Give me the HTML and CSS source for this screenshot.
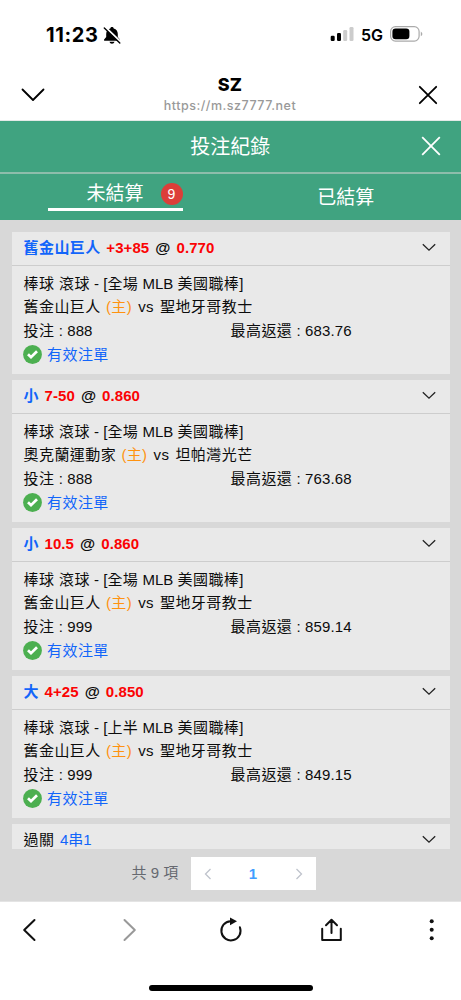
FILE: index.html
```html
<!DOCTYPE html>
<html lang="zh-Hant">
<head>
<meta charset="utf-8">
<meta name="viewport" content="width=device-width, initial-scale=1">
<title>投注紀錄</title>
<link rel="stylesheet" href="styles.css">
</head>
<body>
<header class="status">
  <div class="clock"><span class="time">11:23</span>
    <svg class="bell" width="18" height="19" viewBox="0 0 18 19"><path d="M9 1c-1 0-1.600.6-1.700 1.400C4.500 3.100 3.200 5.400 3.200 8v3L1.300 13.200c-.6.8-.3 1.600.6 1.600h14.200c.9 0 1.200-.8.6-1.600L14.800 11V8c0-2.600-1.300-4.900-4.100-5.600C10.600 1.600 10 1 9 1zM6.500 15.800h5c-.3 1.300-1.200 2-2.500 2s-2.200-.7-2.500-2z"/><path d="M2 1l15.500 15" stroke="#fff" stroke-width="2.400"/><path d="M1.300 1.900l15.500 15" stroke="#000" stroke-width="1.400" stroke-linecap="round"/></svg>
  </div>
  <div class="signals">
    <svg width="24" height="16" viewBox="0 0 24 16"><rect x=".7" y="9.800" width="4" height="5.200" rx="1.200"/><rect x="7" y="7" width="4" height="8" rx="1.200"/><g fill="#ccc"><rect x="13.200" y="4" width="4" height="11" rx="1.200"/><rect x="19.500" y="1" width="4" height="14" rx="1.200"/></g></svg>
    <span class="net">5G</span>
    <svg width="33" height="16" viewBox="0 0 33 16"><rect x=".6" y=".7" width="28.500" height="14.400" rx="4.800" fill="none" stroke="#aaa" stroke-width="1.200"/><rect x="2.400" y="2.500" width="17" height="10.800" rx="3.200"/><path d="M30.800 5.500q3.200 2.400 0 4.800z" fill="#aaa"/></svg>
  </div>
</header>
<div class="browser">
  <svg class="down" width="26" height="16" viewBox="0 0 26 16"><path d="M2.500 2.500L13 13 23.500 2.500"/></svg>
  <div class="site"><div class="name">SZ</div><div class="url">https://m.sz7777.net</div></div>
  <svg class="close" width="20" height="20" viewBox="0 0 20 20"><path d="M1.800 1.800l16.400 16.400M18.200 1.800L1.800 18.200"/></svg>
</div>
<div class="titlebar">
  <h1>投注紀錄</h1>
  <svg class="x" width="20" height="20" viewBox="0 0 20 20"><path d="M1.200 1.200l17.600 17.600M18.800 1.200L1.200 18.800"/></svg>
</div>
<nav class="tabs">
  <div class="tab active"><span>未結算</span><b class="badge">9</b></div>
  <div class="tab"><span>已結算</span></div>
</nav>
<main class="records">
  <div class="list" id="list"></div>
  <div class="pager"><span class="total">共 9 項</span>
    <div class="pages">
      <svg width="8" height="12" viewBox="0 0 8 12"><path d="M6.500 1L1.500 6l5 5"/></svg>
      <b>1</b>
      <svg width="8" height="12" viewBox="0 0 8 12"><path d="M1.500 1l5 5-5 5"/></svg>
    </div>
  </div>
</main>
<footer class="toolbar">
  <div class="tools">
    <svg width="26" height="26" viewBox="0 0 26 26"><path d="M17.500 3L7.200 13l10.300 10" /></svg>
    <svg class="muted" width="26" height="26" viewBox="0 0 26 26"><path d="M6.500 3l10.300 10L6.500 23"/></svg>
    <svg width="26" height="26" viewBox="0 0 26 26"><path d="M12.500 4.200A9.600 9.600 0 1 0 21.900 10.300"/><path d="M12 .4l7 3.900-7 3.900z" class="solid"/></svg>
    <svg width="26" height="26" viewBox="0 0 26 26"><path d="M3.200 11.800v11.200h18.600V11.800M12.500 16V3M7 8.300L12.500 2.800l5.500 5.500"/></svg>
    <svg width="26" height="26" viewBox="0 0 26 26"><g class="solid"><circle cx="12.700" cy="4.300" r="2"/><circle cx="12.700" cy="12.800" r="2"/><circle cx="12.700" cy="21.300" r="2"/></g></svg>
  </div>
  <div class="home"></div>
</footer>
<script src="app.js"></script>
</body>
</html>
```
FILE: styles.css
```css
* { box-sizing: border-box; }
body { margin: 0; width: 461px; height: 1000px; overflow: hidden; background: #fff; color: #111; font-family: "Liberation Sans", "Noto Sans CJK TC", sans-serif; display: flex; flex-direction: column; }
svg { display: block; flex: none; }
.status { height: 69px; display: flex; justify-content: space-between; padding: 25px 38px 0 46px; font-family: Inter, sans-serif; color: #000; }
.clock, .signals { display: flex; height: 20px; align-items: center; }
.signals { margin-top: -1px; }
.net { padding-top: 1px; }
.time { font-size: 20px; font-weight: 700; width: 57px; white-space: nowrap; letter-spacing: .6px; }
.net { font-size: 16px; font-weight: 600; width: 23px; margin: 0 6px 0 7px; }
.browser { height: 52px; display: flex; justify-content: space-between; padding: 0 23px 0 20px; border-bottom: 1px solid #e4e9e7; font-family: Inter, sans-serif; }
.browser path { fill: none; stroke: #000; stroke-width: 1.800; stroke-linecap: round; stroke-linejoin: round; }
.down { margin-top: 18px; }
.close { margin-top: 16px; }
.site { text-align: center; color: #000; margin-left: -4px; }
.name { font-size: 18px; line-height: 22px; margin-top: 5px; font-weight: 800; letter-spacing: .2px; }
.url { font-size: 12.500px; line-height: 19px; color: #999; font-weight: 500; letter-spacing: .5px; }
.titlebar { height: 53px; background: #40a380; border-bottom: 2px solid #8dbdab; color: #fff; display: grid; grid-template-columns: 1fr auto 1fr; align-items: center; padding: 0 20.500px 0 20px; }
h1 { margin: 0; grid-column: 2; font-size: 20px; line-height: 30px; font-weight: 400; }
.x { justify-self: end; margin-top: -2px; }
.x path { fill: none; stroke: #fff; stroke-width: 1.800; }
.tabs { height: 46px; background: #40a380; color: #fff; display: grid; grid-template-columns: 1fr 1fr; font-size: 19px; }
.tab { display: flex; justify-content: center; padding-top: 9px; line-height: 29px; }
.tab.active { height: 37px; margin: 0 48px; padding-top: 6px; justify-content: flex-end; border-bottom: 3px solid #fff; line-height: 27px; gap: 17px; }
.badge { width: 22px; height: 22px; border-radius: 50%; background: #dc3e39; font-weight: 400; font-size: 14px; line-height: 22px; text-align: center; margin-top: 3px; }
.records { height: 682px; background: #d8d8d8; padding: 12px 11.500px 0 12px; border-bottom: 1px solid #e4e4e4; }
.list { height: 617px; overflow: hidden; display: flex; flex-direction: column; gap: 6px; }
.card { height: 142px; flex: none; background: #e9e9e9; font-size: 15px; color: #0c0c0c; }
.head { height: 34px; border-bottom: 1px solid #cdcdcd; display: flex; align-items: center; padding: 0 14px 0 11.500px; font-weight: 700; line-height: 24px; }
.head > span { margin-top: -1px; }
.head svg { margin-left: auto; margin-top: -3px; }
.head path { fill: none; stroke: #222; stroke-width: 1.300; }
.parlay .head { font-weight: 400; }
.blue { color: #1265fa; }
.red { color: #fb0303; letter-spacing: .1px; }
.orange { color: #ff920f; letter-spacing: .35px; margin: 0 1px; }
.zh { letter-spacing: .45px; }
.head .zh { margin-right: 5.500px; }
.head .at { margin: -1px 6px 0; font-size: 15.500px; }
.details { padding: 6px 12px 0 11.500px; line-height: 23.400px; white-space: pre; }
.vs { margin: 0 2px 0 1px; letter-spacing: .3px; }
.amounts { display: grid; grid-template-columns: 207px 1fr; letter-spacing: .1px; }
.valid { display: flex; align-items: center; gap: 5px; height: 25px; }
.valid svg { margin-left: -.5px; }
.pager { margin-top: 8px; height: 33px; display: flex; padding-left: 119.500px; gap: 12px; color: #666970; font-size: 15px; line-height: 32px; }
.total { width: 47px; white-space: nowrap; }
.pages { width: 125px; background: #fff; display: flex; align-items: center; justify-content: space-between; padding: 0 13px; }
.pages b { color: #409eff; }
.pages path { fill: none; stroke: #bfc3cc; stroke-width: 1.300; }
.toolbar { flex: 1; background: #fff; }
.tools { display: flex; justify-content: space-between; padding: 15px 16px 0 17px; }
.tools path { fill: none; stroke: #111; stroke-width: 2; stroke-linejoin: round; stroke-linecap: round; }
.tools .muted path { stroke: #999; }
.tools path.solid, .tools .solid { fill: #111; stroke: none; }
.home { width: 164px; height: 6px; border-radius: 3px; background: #000; margin: 42px auto 0; }
```
FILE: app.js
```js
const bets = [
  ['舊金山巨人', '+3+85', '0.770', '全場', '舊金山巨人', '聖地牙哥教士', '888', '683.76'],
  ['小', '7-50', '0.860', '全場', '奧克蘭運動家', '坦帕灣光芒', '888', '763.68'],
  ['小', '10.5', '0.860', '全場', '舊金山巨人', '聖地牙哥教士', '999', '859.14'],
  ['大', '4+25', '0.850', '上半', '舊金山巨人', '聖地牙哥教士', '999', '849.15']
];
const arrow = '<svg width="14" height="9" viewBox="0 0 14 9"><path d="M.8 1.200L7 7.200l6.200-6"/></svg>';
const check = '<svg width="19" height="19" viewBox="0 0 19 19"><circle cx="9.500" cy="9.500" r="9.400" fill="#4caf50"/><path d="M5 9.200l3 3 6-6" fill="none" stroke="#fff" stroke-width="2.700"/></svg>';
const zh = (text, cls = '') => `<span class="zh ${cls}">${text}</span>`;
document.getElementById('list').innerHTML = bets.map(([pick, line, odds, period, home, away, stake, payout]) => `
<article class="card">
  <div class="head">${zh(pick, 'blue')}<span class="red">${line}</span><span class="at">@</span><span class="red">${odds}</span>${arrow}</div>
  <div class="details"><div>${zh('棒球 滾球')} - [${zh(period)} MLB ${zh('美國職棒')}]</div><div>${zh(home)} <span class="orange">(主)</span> <span class="vs">vs</span> ${zh(away)}</div><div class="amounts"><span>${zh('投注')} : ${stake}</span><span>${zh('最高返還')} : ${payout}</span></div><div class="valid blue">${check}${zh('有效注單')}</div></div>
</article>`).join('') + `<article class="card parlay"><div class="head">${zh('過關')}<span class="blue">4串1</span>${arrow}</div></article>`;
```
